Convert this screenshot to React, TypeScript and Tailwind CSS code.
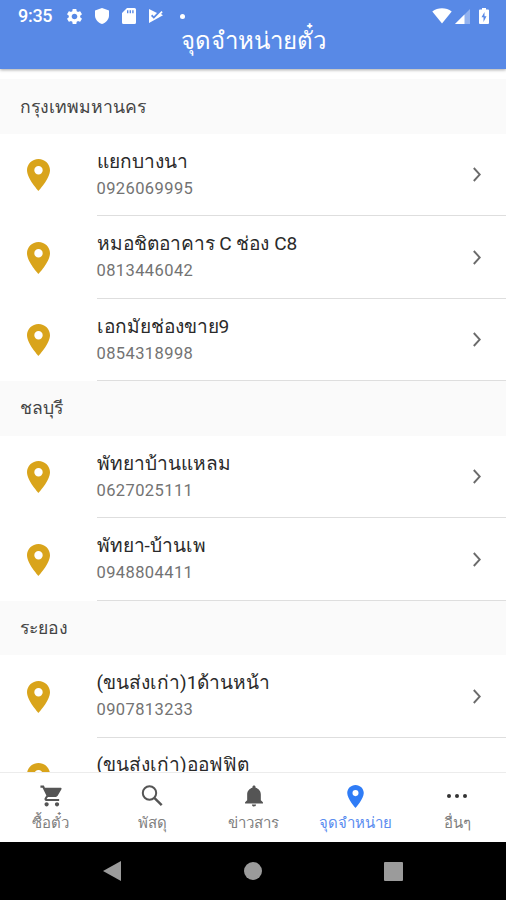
import { IoMdCart, IoMdNotifications } from "react-icons/io"
import { MdSettings } from "react-icons/md"

const sections = [
  {
    name: "กรุงเทพมหานคร",
    places: [
      { name: "แยกบางนา", phone: "0926069995" },
      { name: "หมอชิตอาคาร C ช่อง C8", phone: "0813446042" },
      { name: "เอกมัยช่องขาย9", phone: "0854318998" },
    ],
  },
  {
    name: "ชลบุรี",
    places: [
      { name: "พัทยาบ้านแหลม", phone: "0627025111" },
      { name: "พัทยา-บ้านเพ", phone: "0948804411" },
    ],
  },
  {
    name: "ระยอง",
    places: [
      { name: "(ขนส่งเก่า)1ด้านหน้า", phone: "0907813233" },
      { name: "(ขนส่งเก่า)ออฟฟิต" },
    ],
  },
]

const tabs = [
  { label: "ซื้อตั๋ว", Icon: IoMdCart },
  { label: "พัสดุ", Icon: SearchIcon },
  { label: "ข่าวสาร", Icon: IoMdNotifications },
  { label: "จุดจำหน่าย", Icon: TabPinIcon, active: true },
  { label: "อื่นๆ", Icon: MoreIcon },
]

function PinIcon({ className }: { className?: string }) {
  return (
    <svg viewBox="0 0 23 32" className={className} fill="currentColor">
      <path
        fillRule="evenodd"
        d="M11.500 0C5.100 0 0 5 0 11.300 0 19.700 11.500 32 11.500 32S23 19.700 23 11.300C23 5 17.900 0 11.500 0zm0 7.100a4.200 4.200 0 1 1 0 8.400 4.200 4.200 0 0 1 0-8.400z"
      />
    </svg>
  )
}

function TabPinIcon({ className }: { className?: string }) {
  return (
    <span className={`flex items-center justify-center ${className}`}>
      <PinIcon className="h-[23px] w-[17px]" />
    </span>
  )
}

function SearchIcon({ className }: { className?: string }) {
  return (
    <svg viewBox="0 0 26 26" className={className} fill="none" stroke="currentColor" strokeWidth="2">
      <circle cx="10.500" cy="10" r="6.700" />
      <path d="M15.300 14.800l7.400 7.400" strokeWidth="2.400" />
    </svg>
  )
}

function MoreIcon({ className }: { className?: string }) {
  return (
    <svg viewBox="0 0 26 26" className={className} fill="#333">
      <circle cx="5" cy="13" r="2" />
      <circle cx="13" cy="13" r="2" />
      <circle cx="21" cy="13" r="2" />
    </svg>
  )
}

function StatusBar() {
  return (
    <div className="flex h-8 items-center pr-[17px] pl-[18px] text-white">
      <span className="w-[47px] text-[18px] leading-8 font-medium tracking-[-0.3px]">9:35</span>
      <MdSettings className="size-[19px]" />
      <svg viewBox="0 0 14 16" className="ml-[11px] h-4 w-[14px]" fill="currentColor">
        <path d="M7 0l7 2.600V7.500C14 11.500 11 14.700 7 16 3 14.700 0 11.500 0 7.500V2.600z" />
      </svg>
      <svg viewBox="0 0 14 16" className="ml-[13px] h-4 w-[14px]" fill="currentColor">
        <path
          fillRule="evenodd"
          d="M5 0h7.500Q14 0 14 1.500v13q0 1.500-1.500 1.500h-11Q0 16 0 14.500V5zM5 2.200v3h1.400v-3zM7.600 2.200v3H9v-3zM10.200 2.200v3h1.400v-3z"
        />
      </svg>
      <svg viewBox="0 0 14 16" className="ml-[13px] h-4 w-[14px]" fill="currentColor">
        <path d="M0 1l8 4-3.200 3.200-1.600-1.600L2 7.900l2.800 2.800L12.500 3l1.200 1.200-1.700 1.700L14 7.200 0 15z" />
      </svg>
      <span className="ml-[17px] size-[5px] rounded-full bg-white" />
      <div className="flex-1" />
      <svg viewBox="0 0 20 16" className="h-4 w-5" fill="currentColor">
        <path d="M10 15.500L.3 3.400C5.800-.7 14.200-.7 19.700 3.400z" />
      </svg>
      <svg viewBox="0 0 15 15" className="ml-[3px] size-[15px]" fill="currentColor">
        <path d="M15 0v15H0z" opacity=".35" />
        <path d="M9.500 5.500V15H0z" />
      </svg>
      <svg viewBox="0 0 10 16" className="ml-[9px] h-4 w-[10px]" fill="currentColor">
        <path
          fillRule="evenodd"
          d="M3 0h4v1.500h2q1 0 1 1V15q0 1-1 1H1q-1 0-1-1V2.500q0-1 1-1h2zM5.500 4L2.500 9.300h2V14l3-5.700h-2z"
        />
      </svg>
    </div>
  )
}

function PlaceRow({ name, phone }: { name: string; phone?: string }) {
  return (
    <li className="flex h-[82.4px]">
      <div className="flex w-[96.500px] items-center pl-[27px]">
        <PinIcon className="h-8 w-[23px] text-[#d9a41b]" />
      </div>
      <div className="flex flex-1 items-center justify-between border-b-[1.4px] border-[#dedede] pr-[25px]">
        <div>
          <h3 className="text-[19.100px] leading-[28px] whitespace-nowrap text-[#2a2a2a]">{name}</h3>
          <p className="h-[26px] text-[16.500px] leading-[26px] tracking-[0.4px] text-[#737373]">{phone}</p>
        </div>
        {phone && (
          <svg viewBox="0 0 8 15" className="h-[15px] w-2" fill="none" stroke="#6b6b6b" strokeWidth="1.900">
            <path d="M.8 1l6 6.500-6 6.500" />
          </svg>
        )}
      </div>
    </li>
  )
}

export default function App() {
  return (
    <div className="flex h-[900px] w-[506px] flex-col overflow-hidden bg-white font-[Roboto,'Noto_Sans',sans-serif]">
      <header className="relative z-10 h-[69px] shrink-0 bg-[#5889e6] shadow-[0_1px_3px_rgba(0,0,0,0.35)]">
        <StatusBar />
        <h1 className="-mt-[7px] text-center text-[24px] leading-8 text-white">จุดจำหน่ายตั๋ว</h1>
      </header>

      <main className="min-h-0 flex-1 overflow-hidden pt-[10.400px]">
        {sections.map((section) => (
          <section key={section.name}>
            <h2 className="flex h-[54.700px] items-center bg-[#fafafa] pl-[20px] text-[17.600px] text-[#444]">
              {section.name}
            </h2>
            <ul>
              {section.places.map((place) => (
                <PlaceRow key={place.name} {...place} />
              ))}
            </ul>
          </section>
        ))}
      </main>

      <nav className="-mr-[2px] grid h-[70px] shrink-0 grid-cols-5 border-t border-[#ececec] bg-white">
        {tabs.map(({ label, Icon, active }) => (
          <div
            key={label}
            className={`flex flex-col items-center pt-[10px] ${active ? "text-[#2f7cf6]" : "text-[#555]"}`}
          >
            <Icon className="size-[26px]" />
            <span className={`text-[15px] leading-[28px] ${active ? "text-[#5b8df0]" : "text-[#808080]"}`}>
              {label}
            </span>
          </div>
        ))}
      </nav>

      <footer className="flex h-[58px] shrink-0 items-center justify-between bg-black px-[103px]">
        <svg viewBox="0 0 18 20" className="h-5 w-[18px]" fill="#9b9b9b">
          <path d="M18 0v20L0 10z" />
        </svg>
        <span className="size-[18px] rounded-full bg-[#9b9b9b]" />
        <span className="size-[19px] rounded-[1px] bg-[#9b9b9b]" />
      </footer>
    </div>
  )
}
